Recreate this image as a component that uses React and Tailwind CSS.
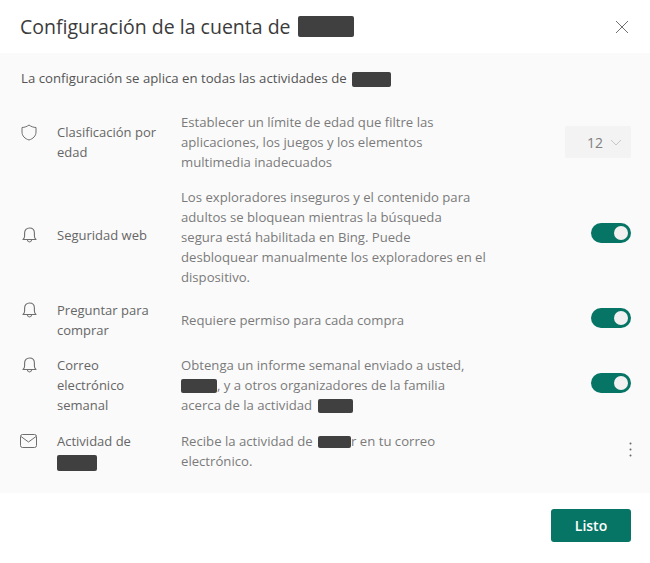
const FONT = "font-['Open_Sans','Noto_Sans',sans-serif]";

function Block({ className }) {
  return <span className={`inline-block align-middle rounded-[2px] bg-[#404040] ${className}`} />;
}

function ShieldIcon() {
  return (
    <svg width="16" height="17" viewBox="0 0 16 17" fill="none" stroke="#6e6e6e" strokeWidth="1">
      <path d="M8 1 C10 2.6 12.5 3.4 15 3.5 V8 C15 12 12 14.8 8 16 C4 14.8 1 12 1 8 V3.5 C3.5 3.4 6 2.6 8 1 Z" />
    </svg>
  );
}

function BellIcon() {
  return (
    <svg className="ml-px" width="15" height="16" viewBox="0 0 15 16" fill="none" stroke="#6e6e6e" strokeWidth="1.1">
      <path d="M1 12.5 C2 11.8 2.6 10.6 2.6 9 V6 C2.6 3 4.6 1 7.5 1 C10.4 1 12.4 3 12.4 6 V9 C12.4 10.6 13 11.8 14 12.5 Z" strokeLinejoin="round" />
      <path d="M5.4 13 C5.7 14.3 6.5 15 7.5 15 C8.5 15 9.3 14.3 9.6 13" />
    </svg>
  );
}

function MailIcon() {
  return (
    <svg className="-ml-px" width="17" height="14" viewBox="0 0 17 14" fill="none" stroke="#6e6e6e" strokeWidth="1">
      <rect x="0.5" y="0.5" width="16" height="13" rx="2" />
      <path d="M1 2.5 L8.5 8 L16 2.5" />
    </svg>
  );
}

function Toggle() {
  return (
    <div className="-mt-1 flex h-5 w-10 items-center justify-end rounded-full bg-[#077565] pr-[3px]">
      <div className="h-[14px] w-[14px] rounded-full bg-[#f1f1f1]" />
    </div>
  );
}

function Row({ icon, label, children, control, rowClass = "", sideClass = "" }) {
  return (
    <div className={`flex items-center ${rowClass}`}>
      <div className={`flex w-[160px] shrink-0 items-center self-stretch ${sideClass}`}>
        <div className="flex items-start">
          <div className="flex h-5 w-[36px] shrink-0 items-center">{icon}</div>
          <div className="text-[13px] leading-5 text-[#666666]">{label}</div>
        </div>
      </div>
      <div className="w-[320px] shrink-0 text-[13.15px] leading-5 text-[#7a7a7a]">{children}</div>
      <div className={`flex flex-1 items-center justify-end ${sideClass}`}>{control}</div>
    </div>
  );
}

export default function App() {
  return (
    <div className={`flex h-[563px] w-[650px] flex-col bg-white ${FONT}`}>
      <header className="flex h-[53px] shrink-0 items-center justify-between px-[21px]">
        <h1 className="-ml-px flex items-center text-[19.5px] font-normal leading-none text-[#3b3b3b]">
          Configuración de la cuenta de
          <Block className="ml-[7px] h-[21px] w-[56px]" />
        </h1>
        <svg width="14" height="14" viewBox="0 0 14 14" stroke="#707070" strokeWidth="1">
          <path d="M1 1 L13 13 M13 1 L1 13" />
        </svg>
      </header>

      <main className="h-[440px] shrink-0 bg-[#fafafa] pl-[21px] pr-[19px]">
        <p className="flex h-[52px] items-center text-[13.2px] text-[#555555]">
          La configuración se aplica en todas las actividades de
          <Block className="ml-[5px] h-[15px] w-[39px]" />
        </p>
        <div className="mt-[7px] flex flex-col">
          <Row
            rowClass="h-[60px]"
            icon={<ShieldIcon />}
            label={<>Clasificación por<br />edad</>}
            control={
              <div className="flex h-8 w-[66px] items-center justify-end gap-[7px] rounded-[2px] bg-[#f3f3f3] pr-[9px]">
                <span className="text-[14px] text-[#808080]">12</span>
                <svg width="12" height="7" viewBox="0 0 12 7" fill="none" stroke="#c8c8c8" strokeWidth="1">
                  <path d="M1 1 L6 6 L11 1" />
                </svg>
              </div>
            }
          >
            Establecer un límite de edad que filtre las<br />
            aplicaciones, los juegos y los elementos<br />
            multimedia inadecuados
          </Row>
          <Row
            rowClass="mt-[15px] h-[100px]"
            sideClass="pb-1"
            icon={<BellIcon />}
            label="Seguridad web"
            control={<Toggle />}
          >
            Los exploradores inseguros y el contenido para<br />
            adultos se bloquean mientras la búsqueda<br />
            segura está habilitada en Bing. Puede<br />
            desbloquear manualmente los exploradores en el<br />
            dispositivo.
          </Row>
          <Row
            rowClass="mt-[13px] h-[40px]"
            icon={<BellIcon />}
            label={<>Preguntar para<br />comprar</>}
            control={<Toggle />}
          >
            Requiere permiso para cada compra
          </Row>
          <Row
            rowClass="mt-[15px] h-[60px]"
            icon={<BellIcon />}
            label={<>Correo<br />electrónico<br />semanal</>}
            control={<Toggle />}
          >
            Obtenga un informe semanal enviado a usted,<br />
            <Block className="h-[14px] w-[36px]" />, y a otros organizadores de la familia<br />
            acerca de la actividad <Block className="ml-[2px] h-[14px] w-[35px]" />
          </Row>
          <Row
            rowClass="mt-[16px] h-[40px]"
            icon={<MailIcon />}
            label={<>Actividad de<br /><Block className="h-4 w-10" /></>}
            control={
              <svg className="mr-[-1px] -mt-1" width="3" height="15" viewBox="0 0 3 15" fill="#666666">
                <circle cx="1.5" cy="1.5" r="1" />
                <circle cx="1.5" cy="7.5" r="1" />
                <circle cx="1.5" cy="13.5" r="1" />
              </svg>
            }
          >
            Recibe la actividad de <Block className="ml-[2px] h-3 w-[33px]" />r en tu correo<br />
            electrónico.
          </Row>
        </div>
      </main>

      <footer className="flex justify-end px-[19px] pt-4">
        <button className="h-[33px] w-20 rounded-[3px] bg-[#077565] text-[14px] font-semibold text-white">
          Listo
        </button>
      </footer>
    </div>
  );
}
